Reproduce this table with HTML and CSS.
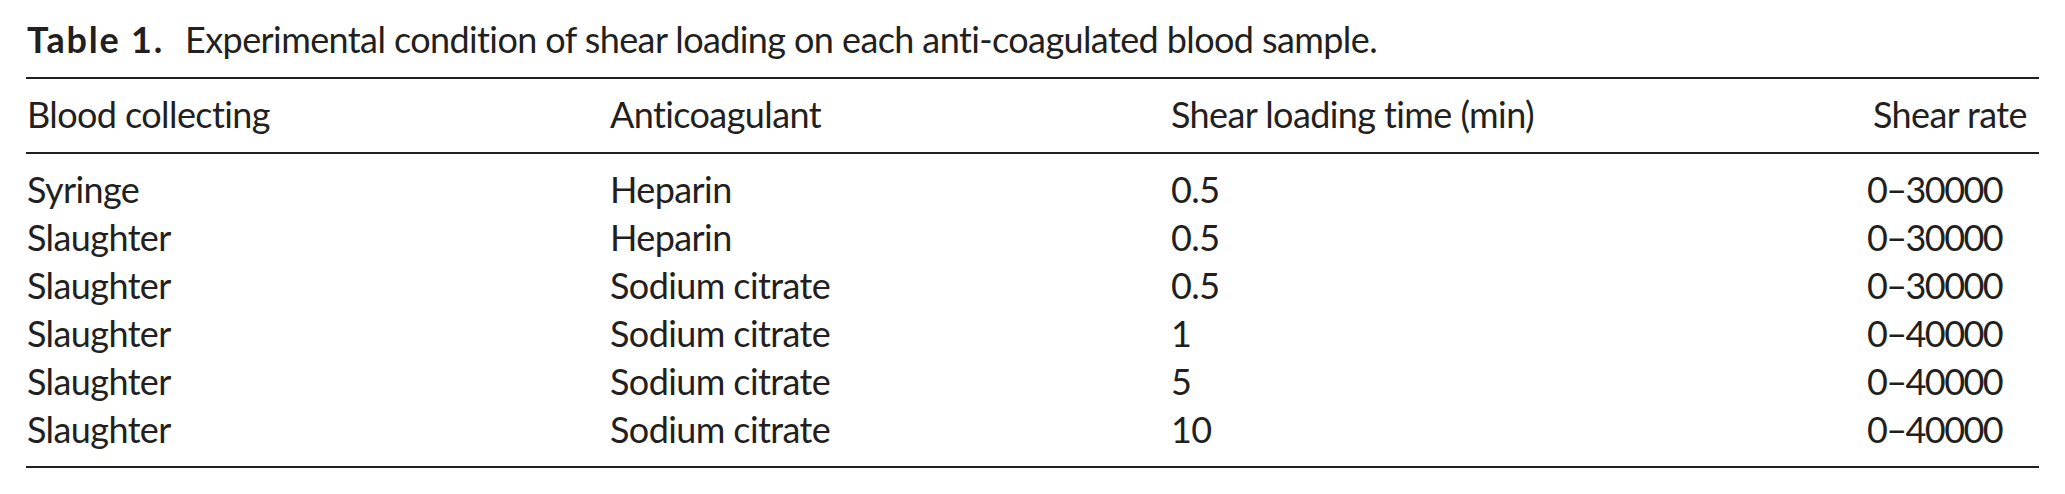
FILE: index.html
```html
<!DOCTYPE html>
<html lang="en">
<head>
<meta charset="utf-8">
<title>Table 1</title>
<link rel="stylesheet" href="styles.css">
</head>
<body>
<div class="caption"><span class="label">Table 1.</span>Experimental condition of shear loading on each anti-coagulated blood sample.</div>
<table class="data">
  <colgroup>
    <col class="c1"><col class="c2"><col class="c3"><col class="c4">
  </colgroup>
  <thead>
    <tr>
      <th>Blood collecting</th>
      <th>Anticoagulant</th>
      <th>Shear loading time (min)</th>
      <th class="num">Shear rate</th>
    </tr>
  </thead>
  <tbody>
    <tr class="first"><td>Syringe</td><td>Heparin</td><td>0.5</td><td class="num">0–30000</td></tr>
    <tr><td>Slaughter</td><td>Heparin</td><td>0.5</td><td class="num">0–30000</td></tr>
    <tr><td>Slaughter</td><td>Sodium citrate</td><td>0.5</td><td class="num">0–30000</td></tr>
    <tr><td>Slaughter</td><td>Sodium citrate</td><td>1</td><td class="num">0–40000</td></tr>
    <tr><td>Slaughter</td><td>Sodium citrate</td><td>5</td><td class="num">0–40000</td></tr>
    <tr class="last"><td>Slaughter</td><td>Sodium citrate</td><td>10</td><td class="num">0–40000</td></tr>
  </tbody>
</table>
</body>
</html>
```
FILE: styles.css
```css
html, body {
  margin: 0;
  padding: 0;
  background: #ffffff;
}

body {
  font-family: Lato, "Open Sans", sans-serif;
  font-size: 36px;
  color: #231f20;
  letter-spacing: -0.6px;
}

.caption {
  margin: 15px 0 0 27px;
  line-height: 48px;
  white-space: nowrap;
}

.caption .label {
  font-weight: 700;
  letter-spacing: 1.8px;
  margin-right: 21px;
}

.data {
  margin: 14px 0 0 26px;
  width: 2013px;
  border-collapse: collapse;
  table-layout: fixed;
  border-top: 2px solid #231f20;
  border-bottom: 2px solid #231f20;
}

.data .c1 { width: 583px; }
.data .c2 { width: 561px; }
.data .c3 { width: 600px; }
.data .c4 { width: 269px; }

.data th,
.data td {
  font-weight: 400;
  text-align: left;
  line-height: 48px;
  padding: 0 0 0 1px;
  white-space: nowrap;
  vertical-align: top;
}

.data thead th {
  padding-top: 11px;
  padding-bottom: 14px;
  border-bottom: 2px solid #231f20;
}

.data .first td {
  padding-top: 11px;
}

.data .last td {
  padding-bottom: 13px;
}

.data th.num {
  text-align: right;
  padding-right: 12px;
}

.data td.num {
  text-align: right;
  padding-right: 37px;
  letter-spacing: -1.6px;
}
```
